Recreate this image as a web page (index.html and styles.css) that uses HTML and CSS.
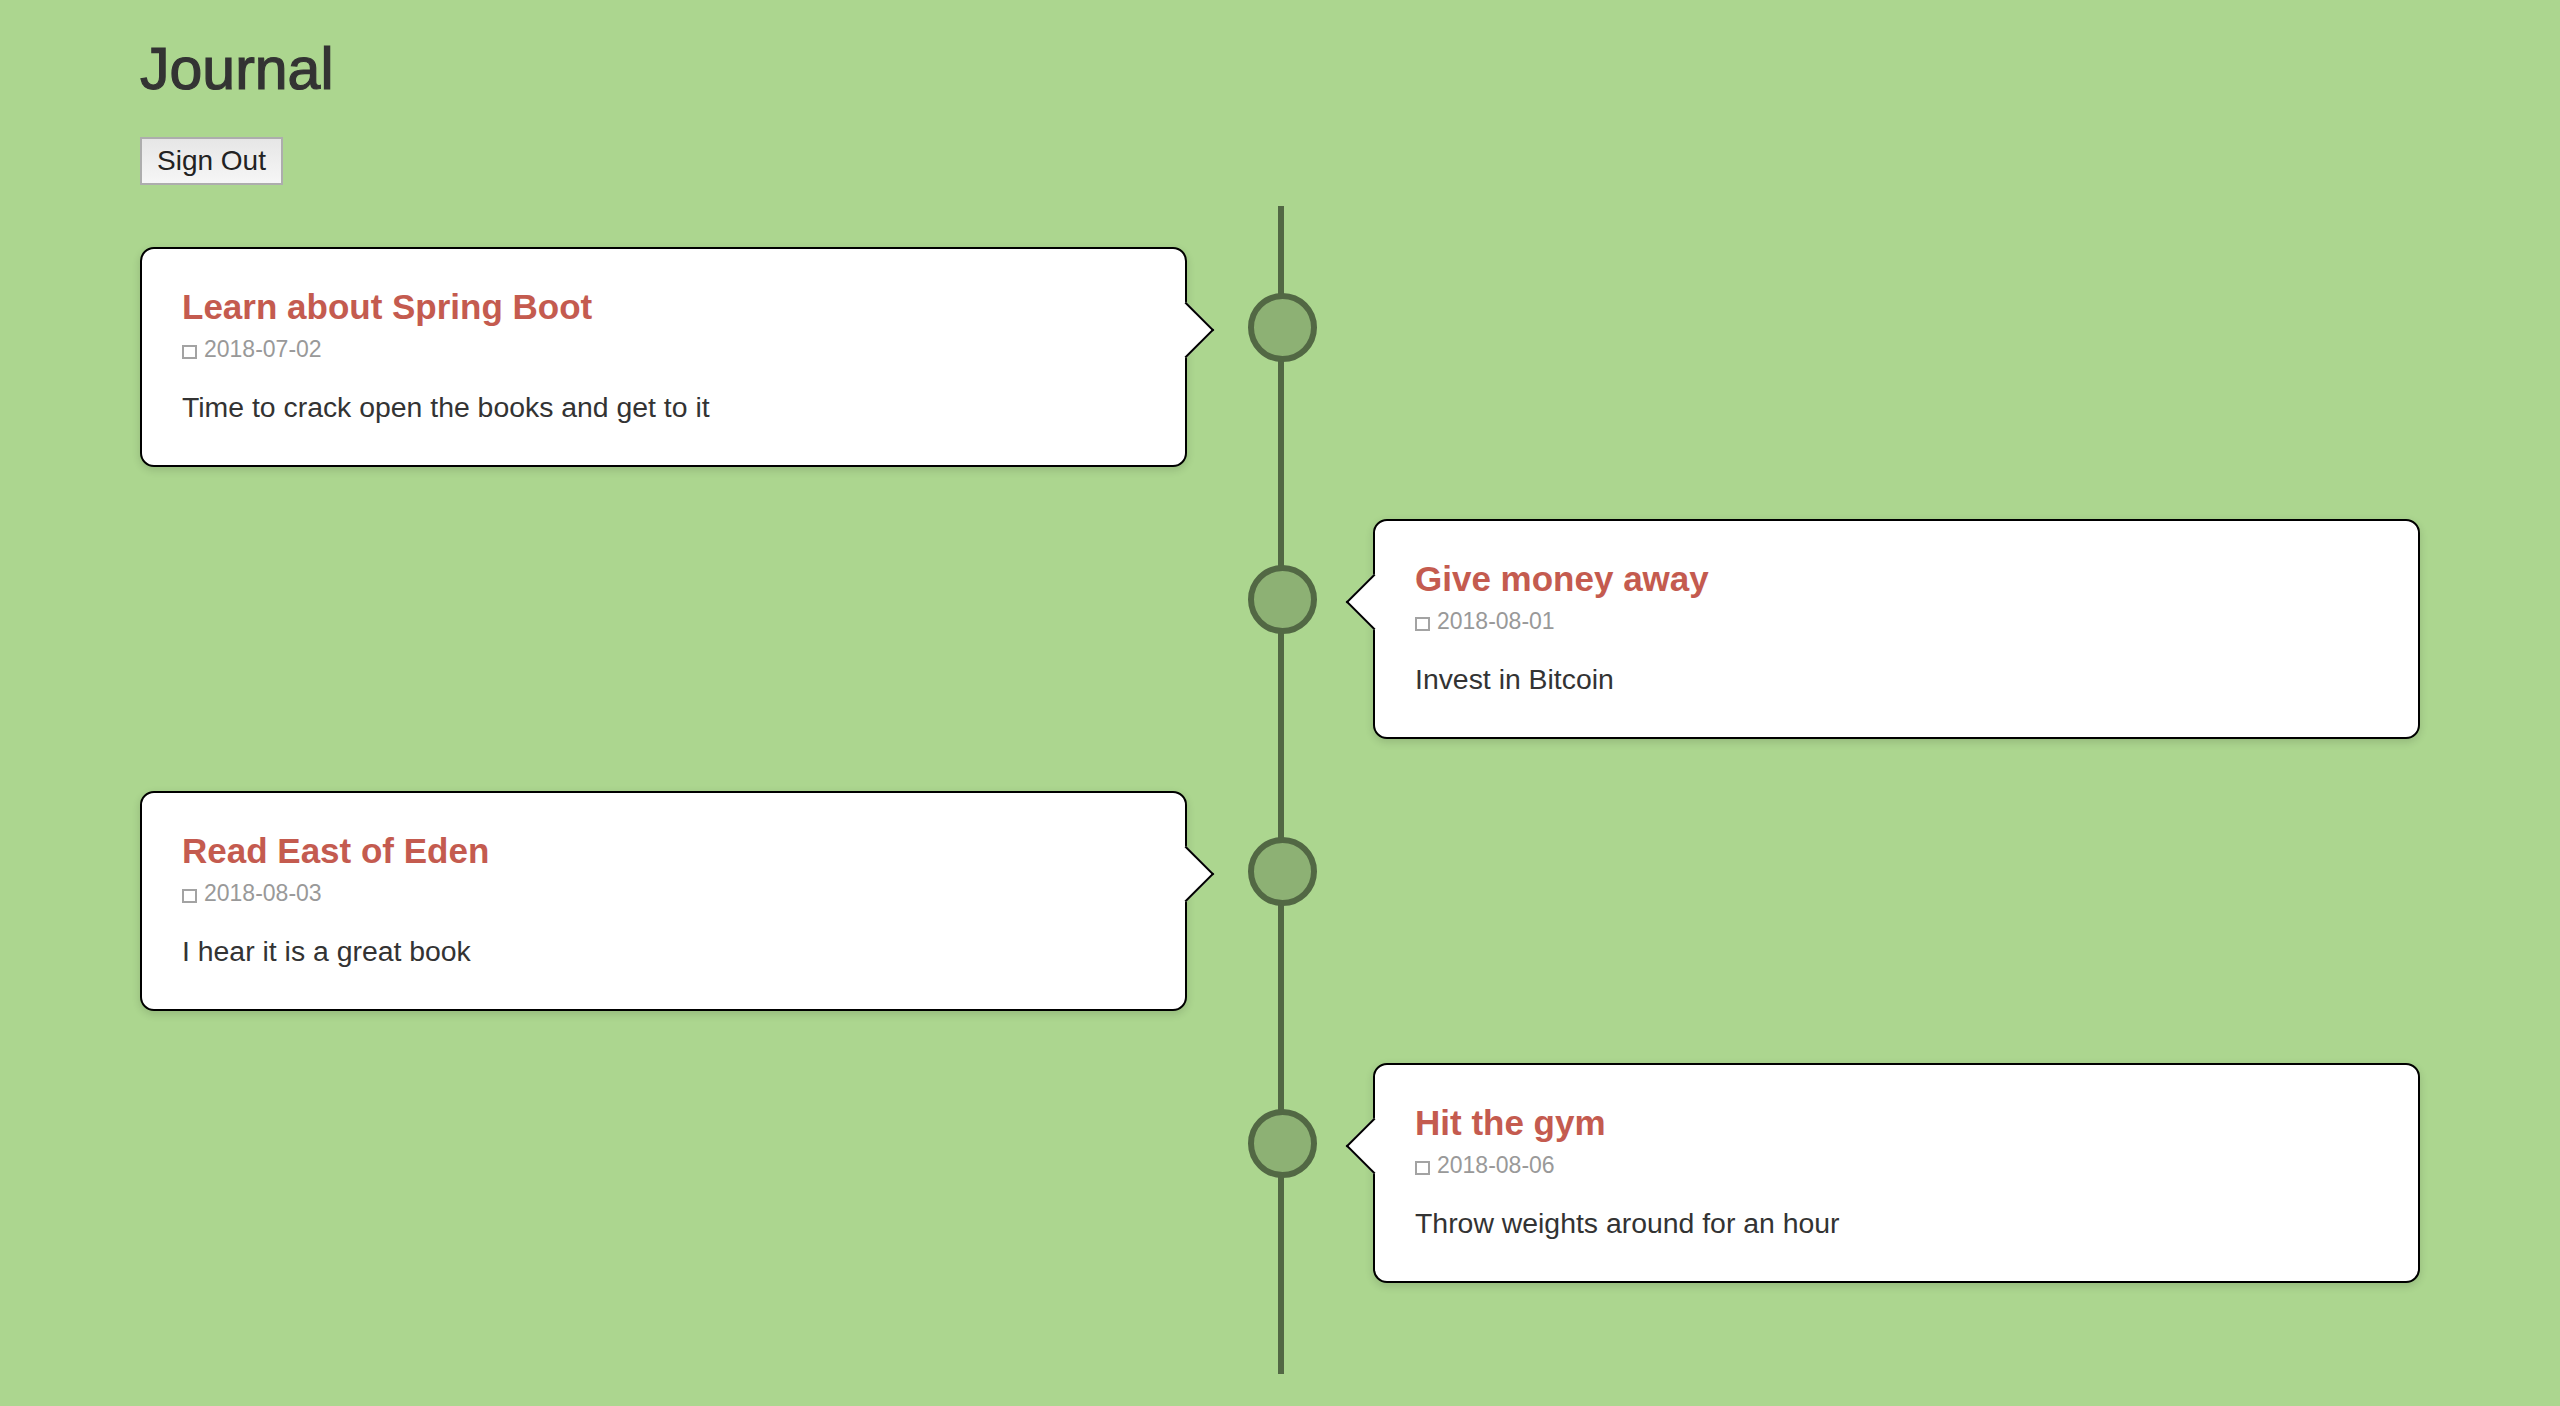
FILE: index.html
```html
<!DOCTYPE html>
<html lang="en">
<head>
<meta charset="utf-8">
<title>Journal</title>
<link rel="stylesheet" href="styles.css">
</head>
<body>
<div class="page">
  <header class="header">
    <h1 class="page-title">Journal</h1>
    <button class="btn" type="button">Sign Out</button>
  </header>

  <section class="timeline">
    <div class="entry entry-left">
      <article class="card">
        <h3 class="card-title">Learn about Spring Boot</h3>
        <div class="card-date"><span class="date-icon"></span>2018-07-02</div>
        <p class="card-text">Time to crack open the books and get to it</p>
      </article>
      <span class="dot"></span>
    </div>

    <div class="entry entry-right">
      <article class="card">
        <h3 class="card-title">Give money away</h3>
        <div class="card-date"><span class="date-icon"></span>2018-08-01</div>
        <p class="card-text">Invest in Bitcoin</p>
      </article>
      <span class="dot"></span>
    </div>

    <div class="entry entry-left">
      <article class="card">
        <h3 class="card-title">Read East of Eden</h3>
        <div class="card-date"><span class="date-icon"></span>2018-08-03</div>
        <p class="card-text">I hear it is a great book</p>
      </article>
      <span class="dot"></span>
    </div>

    <div class="entry entry-right">
      <article class="card">
        <h3 class="card-title">Hit the gym</h3>
        <div class="card-date"><span class="date-icon"></span>2018-08-06</div>
        <p class="card-text">Throw weights around for an hour</p>
      </article>
      <span class="dot"></span>
    </div>
  </section>
</div>
</body>
</html>
```

FILE: styles.css
```css
html, body {
  margin: 0;
  padding: 0;
  background: #acd68f;
}

body {
  font-family: "Liberation Sans", Arial, Helvetica, sans-serif;
  color: #333;
}

.page {
  width: 2280px;
  margin: 0 auto;
  padding-top: 36px;
}

.header {
  display: flex;
  flex-direction: column;
  align-items: flex-start;
}

.page-title {
  margin: 0;
  font-size: 59px;
  line-height: 66px;
  font-weight: 400;
  color: #333;
  -webkit-text-stroke: 1.2px #333;
}

.btn {
  margin-top: 35px;
  box-sizing: border-box;
  height: 48px;
  padding: 6px 15px 6px;
  border: 2px solid #adadad;
  border-radius: 0;
  background: linear-gradient(#e6e6e6, #f6f6f6);
  font-family: "Liberation Sans", Arial, Helvetica, sans-serif;
  font-size: 28px;
  line-height: 32px;
  color: #222;
}

.timeline {
  position: relative;
  margin-top: 21px;
  padding: 41px 0 91px;
  display: flex;
  flex-direction: column;
  gap: 52px;
}

.timeline::before {
  content: "";
  position: absolute;
  top: 0;
  bottom: 0;
  left: 50%;
  width: 6px;
  margin-left: -2px;
  background: #526844;
}

.entry {
  position: relative;
  width: 50%;
  box-sizing: border-box;
}

.entry-left {
  padding-right: 93px;
}

.entry-right {
  margin-left: 50%;
  padding-left: 93px;
}

.card {
  position: relative;
  box-sizing: border-box;
  height: 220px;
  padding: 38px 40px 0;
  background: #fff;
  border: 2px solid #000;
  border-radius: 14px;
  box-shadow: 0 3px 8px rgba(0, 0, 0, 0.14);
}

.card::after {
  content: "";
  position: absolute;
  top: 61px;
  width: 40px;
  height: 40px;
  box-sizing: border-box;
  background: #fff;
  transform: rotate(45deg);
}

.entry-left .card::after {
  right: -21px;
  border-top: 2px solid #000;
  border-right: 2px solid #000;
}

.entry-right .card::after {
  left: -21px;
  border-bottom: 2px solid #000;
  border-left: 2px solid #000;
}

.card-title {
  margin: 0;
  font-size: 35px;
  line-height: 40px;
  font-weight: 700;
  color: #c45b4f;
}

.card-date {
  margin-top: 7px;
  font-size: 23px;
  line-height: 30px;
  color: #999;
}

.date-icon {
  display: inline-block;
  box-sizing: border-box;
  width: 15px;
  height: 14px;
  border: 2px solid #a3a3a3;
  margin-right: 7px;
  vertical-align: -2px;
}

.card-text {
  margin: 23px 0 0;
  font-size: 28.4px;
  line-height: 40px;
  color: #333;
}

.dot {
  position: absolute;
  top: 46px;
  width: 69px;
  height: 69px;
  box-sizing: border-box;
  border: 6px solid #526844;
  border-radius: 50%;
  background: #8db174;
  z-index: 1;
}

.entry-left .dot {
  right: -37px;
}

.entry-right .dot {
  left: -32px;
}
```
